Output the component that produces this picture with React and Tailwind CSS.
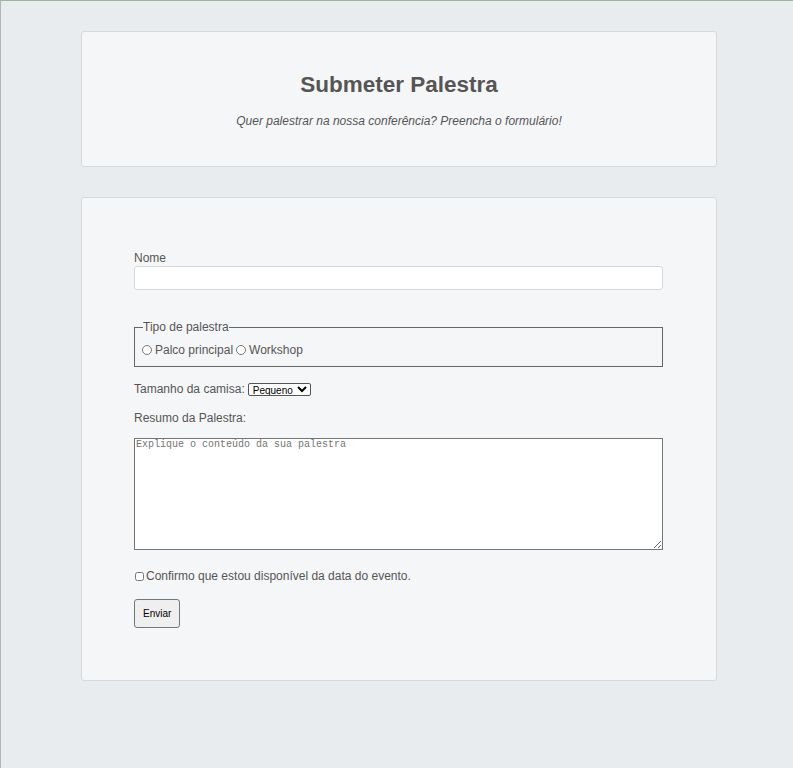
import React, { useState } from 'react';

function App() {
  const [nome, setNome] = useState('');
  const [tipo, setTipo] = useState('');
  const [camisa, setCamisa] = useState('pequeno');
  const [resumo, setResumo] = useState('');
  const [confirmo, setConfirmo] = useState(false);

  const handleSubmit = (e) => {
    e.preventDefault();
    console.log({ nome, tipo, camisa, resumo, confirmo });
  };

  return (
    <div className="min-h-screen bg-[#e9ecef] border-t border-t-[#9fb59a] border-l border-l-[#b4b4b4] pt-[30px] pb-[60px] text-[12px] leading-[14px] text-[#555] font-['Liberation_Sans',Arial,sans-serif]">
      <div className="w-[636px] ml-[80px] flex flex-col gap-[30px]">
        <div className="bg-[#f5f6f8] border border-[#d6d9dc] rounded-[3px] pt-[40px] pb-[38px] flex flex-col items-center">
          <h1 className="text-[22.5px] leading-[26px] font-bold text-[#555]">Submeter Palestra</h1>
          <p className="mt-[16px] italic">Quer palestrar na nossa conferência? Preencha o formulário!</p>
        </div>

        <div className="bg-[#f5f6f8] border border-[#d6d9dc] rounded-[3px] pl-[52px] pr-[53px] pt-[52px] pb-[52px]">
          <form onSubmit={handleSubmit} className="flex flex-col">
            <label htmlFor="nome" className="block mt-[1px]">Nome</label>
            <input
              id="nome"
              type="text"
              value={nome}
              onChange={(e) => setNome(e.target.value)}
              className="mt-[1px] h-[24px] w-full bg-white border border-[#d6d9dc] rounded-[3px] px-2"
            />

            <fieldset className="mt-[30px] border border-[#666] pl-[7px] pr-[8px] pb-[9px]">
              <legend className="ml-[1px] px-0">Tipo de palestra</legend>
              <div className="pt-[9px] flex items-center">
                <label className="flex items-center">
                  <input
                    type="radio"
                    name="tipo"
                    value="palco"
                    checked={tipo === 'palco'}
                    onChange={(e) => setTipo(e.target.value)}
                    className="w-[10px] h-[10px] m-0 mr-[3px]"
                  />
                  Palco principal
                </label>
                <label className="flex items-center ml-[3px]">
                  <input
                    type="radio"
                    name="tipo"
                    value="workshop"
                    checked={tipo === 'workshop'}
                    onChange={(e) => setTipo(e.target.value)}
                    className="w-[10px] h-[10px] m-0 mr-[3px]"
                  />
                  Workshop
                </label>
              </div>
            </fieldset>

            <div className="mt-[15px] flex items-center">
              <label htmlFor="camisa">Tamanho da camisa:</label>
              <select
                id="camisa"
                value={camisa}
                onChange={(e) => setCamisa(e.target.value)}
                className="ml-[3px] pl-0 h-[13px] text-[10px] leading-[11px] text-black border border-[#555] rounded-[2px] bg-white"
              >
                <option value="pequeno">Pequeno</option>
                <option value="medio">Médio</option>
                <option value="grande">Grande</option>
              </select>
            </div>

            <label htmlFor="resumo" className="mt-[15px] block">Resumo da Palestra:</label>
            <textarea
              id="resumo"
              value={resumo}
              onChange={(e) => setResumo(e.target.value)}
              placeholder="Explique o conteúdo da sua palestra"
              className="mt-[13px] h-[112px] w-full bg-white border border-[#767676] px-[1px] py-0 text-[10px] leading-[12px] font-['Liberation_Mono',monospace] text-black placeholder:text-[#757575]"
            />

            <label className="mt-[19px] flex items-center">
              <input
                type="checkbox"
                checked={confirmo}
                onChange={(e) => setConfirmo(e.target.checked)}
                className="w-[9px] h-[9px] m-0 ml-[1px] mr-[2px]"
              />
              Confirmo que estou disponível da data do evento.
            </label>

            <div className="mt-[16px]">
              <button
                type="submit"
                className="h-[29px] px-[8px] text-[10px] text-black bg-[#efefef] border border-[#767676] rounded-[3px]"
              >
                Enviar
              </button>
            </div>
          </form>
        </div>
      </div>
    </div>
  );
}

export default App;
